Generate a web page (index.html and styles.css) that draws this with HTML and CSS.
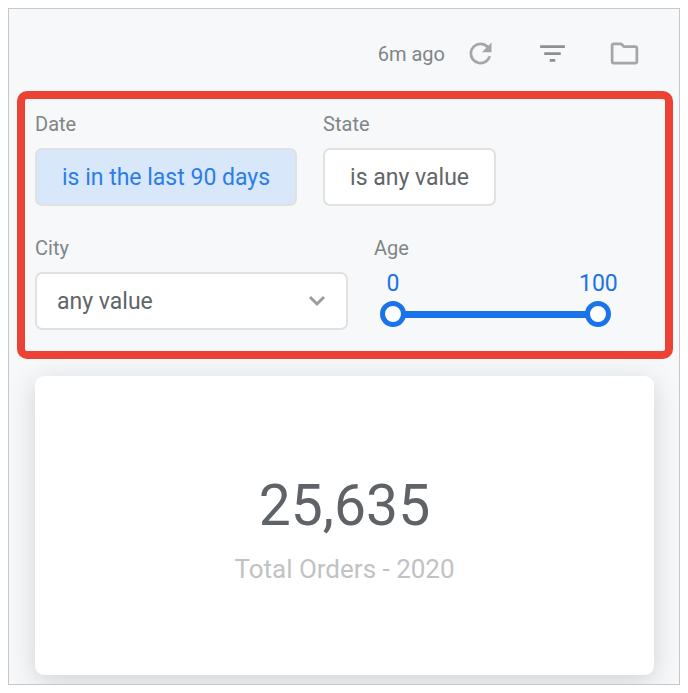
FILE: index.html
```html
<!DOCTYPE html>
<html lang="en">
	<head>
		<meta charset="UTF-8">
		<meta name="viewport" content="width=device-width, initial-scale=1">
		<title>Orders dashboard</title>
		<link rel="stylesheet" href="styles.css">
	</head>
	<body>
		<main class="dashboard">
			<header class="toolbar">
				<span class="updated">6m ago</span>
				<button type="button" class="icon-btn" aria-label="Reload">
					<svg viewBox="0 0 24 24"><path d="M17.65 6.35A7.96 7.96 0 0 0 12 4a8 8 0 1 0 7.73 10h-2.08A6 6 0 1 1 12 6c1.66 0 3.14.69 4.22 1.78L13 11h7V4z"/></svg>
				</button>
				<button type="button" class="icon-btn dark" aria-label="Filters">
					<svg viewBox="0 0 24 24"><path d="M10 18h4v-2h-4v2zM3 6v2h18V6H3zm3 7h12v-2H6v2z"/></svg>
				</button>
				<button type="button" class="icon-btn" aria-label="Folder">
					<svg viewBox="0 0 24 24"><path d="M9.17 6l2 2H20v10H4V6h5.17M10 4H4c-1.1 0-2 .9-2 2v12c0 1.1.9 2 2 2h16c1.1 0 2-.9 2-2V8c0-1.1-.9-2-2-2h-8z"/></svg>
				</button>
			</header>

			<section class="filters">
				<div class="row">
					<div class="filter">
						<label for="date">Date</label>
						<button type="button" id="date" class="control active">is in the last 90 days</button>
					</div>
					<div class="filter">
						<label for="state">State</label>
						<button type="button" id="state" class="control">is any value</button>
					</div>
				</div>
				<div class="row">
					<div class="filter city">
						<label for="city">City</label>
						<div class="select-wrap">
							<select id="city" class="control">
								<option>any value</option>
							</select>
							<svg class="chevron" viewBox="0 0 18 12"><path d="M2 2l7 7 7-7"/></svg>
						</div>
					</div>
					<div class="filter age">
						<label for="ageMin">Age</label>
						<div class="slider">
							<div class="values">
								<output id="minValue" for="ageMin">0</output>
								<output id="maxValue" for="ageMax">100</output>
							</div>
							<div class="track">
								<input type="range" id="ageMin" min="0" max="100" value="0">
								<input type="range" id="ageMax" min="0" max="100" value="100" aria-label="Maximum age">
							</div>
						</div>
					</div>
				</div>
			</section>

			<section class="card">
				<div class="number">25,635</div>
				<div class="caption">Total Orders - 2020</div>
			</section>
		</main>

		<script>
			var min = document.querySelector('#ageMin');
			var max = document.querySelector('#ageMax');
			//the two thumbs must not pass each other
			min.oninput = function(){
				min.value = Math.min(min.value, max.value);
				document.querySelector('#minValue').value = min.value;
			};
			max.oninput = function(){
				max.value = Math.max(min.value, max.value);
				document.querySelector('#maxValue').value = max.value;
			};
		</script>
	</body>
</html>
```
FILE: styles.css
```css
*{box-sizing: border-box;}
body{
	margin: 8px;
	background: #fff;
	color: #5f6368;
	font-family: Roboto, "Liberation Sans", sans-serif;
}
button,select,input{
	margin: 0;
	font-family: inherit;
}
.dashboard{
	border: 1px solid #c6c7c9;
	background: #f6f8fa;
	box-shadow: 0 2px 8px rgba(0,0,0,.2);
	overflow: hidden;
}

/* toolbar */
.toolbar{
	display: flex;
	justify-content: flex-end;
	align-items: center;
	gap: 39px;
	padding: 28px 38px 21px;
}
.updated{
	margin-right: -20px;
	font-size: 20px;
	line-height: 24px;
	color: #808686;
}
.icon-btn{
	width: 33px;
	height: 33px;
	padding: 0;
	border: 0;
	background: none;
	cursor: pointer;
}
.icon-btn svg{
	display: block;
	fill: #a5a6a6;
}
.icon-btn.dark svg{
	fill: #8c9091;
}

/* filters */
.filters{
	position: relative;
	z-index: 1;
	display: flex;
	flex-direction: column;
	gap: 30px;
	margin: 0 6px 0 8px;
	padding: 13px 10px 21px;
	border: 8px solid #ec4235;
	border-radius: 10px;
	background: #f6f8fa;
}
.row{
	display: flex;
	flex-wrap: wrap;
	gap: 26px;
}
.filter label{
	display: block;
	margin-bottom: 12px;
	font-size: 20px;
	line-height: 24px;
	color: #808686;
}
.control{
	display: block;
	height: 58px;
	padding: 0 25px;
	border: 2px solid #dfe1e2;
	border-radius: 7px;
	background: #fff;
	color: #5f6668;
	font-size: 23px;
	cursor: pointer;
}
.control.active{
	background: #d9e7fb;
	color: #2b7de9;
}
.city{
	flex: 313;
}
.age{
	flex: 281;
}
.select-wrap{
	position: relative;
}
.select-wrap select{
	width: 100%;
	padding: 0 50px 0 20px;
	appearance: none;
}
.chevron{
	position: absolute;
	top: 23px;
	right: 22px;
	width: 18px;
	height: 12px;
	fill: none;
	stroke: #9a9d9e;
	stroke-width: 3;
	pointer-events: none;
}

/* slider */
.age label{
	margin-bottom: 10px;
}
.slider{
	margin-right: 38px;
}
.values{
	display: flex;
	justify-content: space-between;
}
.values output{
	width: 38px;
	text-align: center;
	font-size: 23px;
	line-height: 28px;
	color: #1a73e8;
}
.track{
	display: grid;
	align-items: center;
	margin: 3px 6px 0;
	background: linear-gradient(#1a73e8, #1a73e8) center / 90% 7px no-repeat;
}
.track input{
	grid-area: 1 / 1;
	width: 100%;
	height: 26px;
	appearance: none;
	background: none;
	pointer-events: none;
}
.track input::-webkit-slider-thumb{
	width: 26px;
	height: 26px;
	border: 5px solid #1a73e8;
	border-radius: 50%;
	background: #fff;
	appearance: none;
	pointer-events: auto;
	cursor: pointer;
}

/* result card */
.card{
	display: flex;
	flex-direction: column;
	align-items: center;
	margin: 17px 25px 9px 26px;
	padding: 94px 20px 90px;
	border-radius: 9px;
	background: #fff;
	box-shadow: 0 6px 26px rgba(60,64,67,.2);
}
.number{
	font-size: 57px;
	line-height: 72px;
}
.caption{
	margin-top: 11px;
	font-size: 26px;
	line-height: 32px;
	color: #c0c2c3;
}
```
